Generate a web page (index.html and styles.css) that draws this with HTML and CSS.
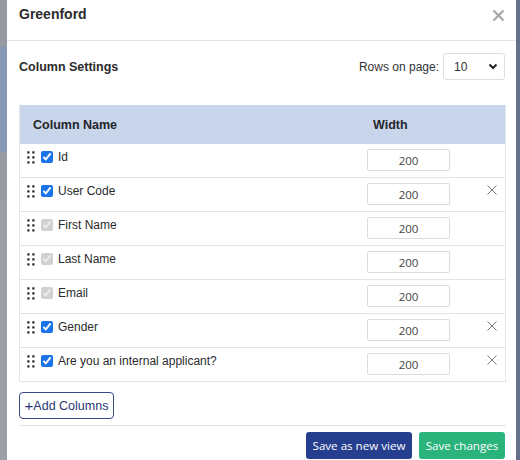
FILE: index.html
```html
<!DOCTYPE html>
<html>
<head>
<meta charset="utf-8">
<link rel="stylesheet" href="styles.css">
</head>
<body>
<div class="screen">
  <div class="backdrop-left"></div>
  <div class="modal">
    <div class="modal-header">
      <h1 class="title">Greenford</h1>
      <span class="close"><svg width="13" height="13" viewBox="0 0 13 13"><path d="M1.5 1.5 L11.5 11.5 M11.5 1.5 L1.5 11.5" stroke="#a9a9a9" stroke-width="2.4" stroke-linecap="butt"/></svg></span>
    </div>
    <div class="modal-body">
      <div class="settings-bar">
        <h2 class="section-title">Column Settings</h2>
        <label class="rows-label">Rows on page:
          <select class="rows-select"><option>10</option></select>
        </label>
      </div>
      <div class="table">
        <div class="thead">
          <div class="th">Column Name</div>
          <div class="th">Width</div>
          <div class="th"></div>
        </div>
        <div class="tr">
          <div class="name-cell"><span class="handle"><svg width="8" height="13" viewBox="0 0 8 13"><g fill="#222"><rect x="0.3" y="0.3" width="2.2" height="2.2"/><rect x="5.3" y="0.3" width="2.2" height="2.2"/><rect x="0.3" y="5.3" width="2.2" height="2.2"/><rect x="5.3" y="5.3" width="2.2" height="2.2"/><rect x="0.3" y="10.3" width="2.2" height="2.2"/><rect x="5.3" y="10.3" width="2.2" height="2.2"/></g></svg></span><input type="checkbox" class="check" checked><span class="label">Id</span></div>
          <div class="width-cell"><input class="width-input" type="text" value="200"></div>
          <div class="del-cell"></div>
        </div>
        <div class="tr">
          <div class="name-cell"><span class="handle"><svg width="8" height="13" viewBox="0 0 8 13"><g fill="#222"><rect x="0.3" y="0.3" width="2.2" height="2.2"/><rect x="5.3" y="0.3" width="2.2" height="2.2"/><rect x="0.3" y="5.3" width="2.2" height="2.2"/><rect x="5.3" y="5.3" width="2.2" height="2.2"/><rect x="0.3" y="10.3" width="2.2" height="2.2"/><rect x="5.3" y="10.3" width="2.2" height="2.2"/></g></svg></span><input type="checkbox" class="check" checked><span class="label">User Code</span></div>
          <div class="width-cell"><input class="width-input" type="text" value="200"></div>
          <div class="del-cell"><svg width="10" height="10" viewBox="0 0 10 10"><path d="M0.5 0.5 L9.5 9.5 M9.5 0.5 L0.5 9.5" stroke="#777" stroke-width="1"/></svg></div>
        </div>
        <div class="tr">
          <div class="name-cell"><span class="handle"><svg width="8" height="13" viewBox="0 0 8 13"><g fill="#222"><rect x="0.3" y="0.3" width="2.2" height="2.2"/><rect x="5.3" y="0.3" width="2.2" height="2.2"/><rect x="0.3" y="5.3" width="2.2" height="2.2"/><rect x="5.3" y="5.3" width="2.2" height="2.2"/><rect x="0.3" y="10.3" width="2.2" height="2.2"/><rect x="5.3" y="10.3" width="2.2" height="2.2"/></g></svg></span><input type="checkbox" class="check" checked disabled><span class="label">First Name</span></div>
          <div class="width-cell"><input class="width-input" type="text" value="200"></div>
          <div class="del-cell"></div>
        </div>
        <div class="tr">
          <div class="name-cell"><span class="handle"><svg width="8" height="13" viewBox="0 0 8 13"><g fill="#222"><rect x="0.3" y="0.3" width="2.2" height="2.2"/><rect x="5.3" y="0.3" width="2.2" height="2.2"/><rect x="0.3" y="5.3" width="2.2" height="2.2"/><rect x="5.3" y="5.3" width="2.2" height="2.2"/><rect x="0.3" y="10.3" width="2.2" height="2.2"/><rect x="5.3" y="10.3" width="2.2" height="2.2"/></g></svg></span><input type="checkbox" class="check" checked disabled><span class="label">Last Name</span></div>
          <div class="width-cell"><input class="width-input" type="text" value="200"></div>
          <div class="del-cell"></div>
        </div>
        <div class="tr">
          <div class="name-cell"><span class="handle"><svg width="8" height="13" viewBox="0 0 8 13"><g fill="#222"><rect x="0.3" y="0.3" width="2.2" height="2.2"/><rect x="5.3" y="0.3" width="2.2" height="2.2"/><rect x="0.3" y="5.3" width="2.2" height="2.2"/><rect x="5.3" y="5.3" width="2.2" height="2.2"/><rect x="0.3" y="10.3" width="2.2" height="2.2"/><rect x="5.3" y="10.3" width="2.2" height="2.2"/></g></svg></span><input type="checkbox" class="check" checked disabled><span class="label">Email</span></div>
          <div class="width-cell"><input class="width-input" type="text" value="200"></div>
          <div class="del-cell"></div>
        </div>
        <div class="tr">
          <div class="name-cell"><span class="handle"><svg width="8" height="13" viewBox="0 0 8 13"><g fill="#222"><rect x="0.3" y="0.3" width="2.2" height="2.2"/><rect x="5.3" y="0.3" width="2.2" height="2.2"/><rect x="0.3" y="5.3" width="2.2" height="2.2"/><rect x="5.3" y="5.3" width="2.2" height="2.2"/><rect x="0.3" y="10.3" width="2.2" height="2.2"/><rect x="5.3" y="10.3" width="2.2" height="2.2"/></g></svg></span><input type="checkbox" class="check" checked><span class="label">Gender</span></div>
          <div class="width-cell"><input class="width-input" type="text" value="200"></div>
          <div class="del-cell"><svg width="10" height="10" viewBox="0 0 10 10"><path d="M0.5 0.5 L9.5 9.5 M9.5 0.5 L0.5 9.5" stroke="#777" stroke-width="1"/></svg></div>
        </div>
        <div class="tr">
          <div class="name-cell"><span class="handle"><svg width="8" height="13" viewBox="0 0 8 13"><g fill="#222"><rect x="0.3" y="0.3" width="2.2" height="2.2"/><rect x="5.3" y="0.3" width="2.2" height="2.2"/><rect x="0.3" y="5.3" width="2.2" height="2.2"/><rect x="5.3" y="5.3" width="2.2" height="2.2"/><rect x="0.3" y="10.3" width="2.2" height="2.2"/><rect x="5.3" y="10.3" width="2.2" height="2.2"/></g></svg></span><input type="checkbox" class="check" checked><span class="label">Are you an internal applicant?</span></div>
          <div class="width-cell"><input class="width-input" type="text" value="200"></div>
          <div class="del-cell"><svg width="10" height="10" viewBox="0 0 10 10"><path d="M0.5 0.5 L9.5 9.5 M9.5 0.5 L0.5 9.5" stroke="#777" stroke-width="1"/></svg></div>
        </div>
      </div>
      <button class="add-btn"><span class="plus">+</span>Add Columns</button>
    </div>
    <div class="modal-footer">
      <button class="btn btn-primary">Save as new view</button>
      <button class="btn btn-success">Save changes</button>
    </div>
  </div>
  <div class="backdrop-right"></div>
</div>
</body>
</html>
```
FILE: styles.css
```css
* { box-sizing: border-box; }
html, body { margin: 0; padding: 0; }
body {
  font-family: "Liberation Sans", Arial, sans-serif;
  color: #2a2a2a;
  background: #8f959c;
}
.screen {
  display: flex;
  width: 520px;
  height: 460px;
  overflow: hidden;
}
.backdrop-left {
  width: 7px;
  flex: none;
  background: linear-gradient(to bottom,
    #959aa1 0, #959aa1 47px,
    #8797b6 47px, #8797b6 152px,
    #979ca3 152px, #979ca3 200px,
    #9ba0a6 200px, #9ba0a6 460px);
}
.backdrop-right {
  width: 4px;
  flex: none;
  background: #65708c;
}
.modal {
  width: 509px;
  flex: none;
  background: #fff;
  display: flex;
  flex-direction: column;
}
.modal-header {
  height: 41px;
  border-bottom: 1px solid #e3e3e3;
  display: flex;
  justify-content: space-between;
  align-items: flex-start;
  padding: 0 11px 0 12px;
}
.title {
  margin: 5px 0 0;
  font-size: 14px;
  line-height: 18px;
  font-weight: bold;
  color: #2b2b2b;
}
.close {
  margin-top: 9px;
  display: flex;
}
.modal-body {
  padding: 12px 10px 0 12px;
}
.settings-bar {
  height: 27px;
  display: flex;
  justify-content: space-between;
  align-items: center;
}
.section-title {
  margin: 0;
  font-size: 12.5px;
  font-weight: bold;
  color: #2b2b2b;
}
.rows-label {
  display: flex;
  align-items: center;
  gap: 4px;
  font-size: 12px;
  color: #333;
  margin-right: 1px;
}
.rows-select {
  -webkit-appearance: none;
  appearance: none;
  width: 62px;
  height: 27px;
  border: 1px solid #dedede;
  border-radius: 3px;
  background: #fff url("data:image/svg+xml;utf8,<svg xmlns='http://www.w3.org/2000/svg' width='10' height='7' viewBox='0 0 10 7'><path d='M1.5 1.5 L5 5 L8.5 1.5' fill='none' stroke='%23222' stroke-width='2'/></svg>") no-repeat right 6px center;
  padding: 0 0 0 10px;
  font-family: "Liberation Sans", Arial, sans-serif;
  font-size: 12px;
  color: #333;
}
.table {
  margin-top: 25px;
  border: 1px solid #e3e6ea;
  border-top: none;
  border-bottom: none;
}
.thead, .tr {
  display: grid;
  grid-template-columns: 340px 120px 1fr;
}
.thead {
  height: 39px;
  background: #c9d5eb;
  align-items: center;
}
.th {
  padding-left: 13px;
  font-size: 12.5px;
  font-weight: bold;
  color: #24262b;
}
.tr {
  height: 34px;
  border-bottom: 1px solid #e3e3e3;
  align-items: flex-start;
}
.name-cell {
  display: flex;
  align-items: flex-start;
  padding: 6px 0 0 7px;
}
.handle {
  display: flex;
  margin-top: 1px;
  width: 8px;
}
.check {
  margin: 1px 0 0 6px;
  width: 12px;
  height: 12px;
  accent-color: #1a73e8;
}
.label {
  margin-left: 5px;
  font-size: 12px;
  line-height: 15px;
  color: #2b2b2b;
}
.width-cell {
  padding: 5px 0 0 7px;
}
.width-input {
  width: 83px;
  height: 22px;
  border: 1px solid #dcdcdc;
  border-radius: 2px;
  text-align: center;
  font-family: "Open Sans", sans-serif;
  font-size: 11.5px;
  color: #444;
  padding: 0;
}
.del-cell {
  display: flex;
  justify-content: center;
  padding-top: 7px;
  padding-right: 1px;
}
.add-btn {
  margin-top: 10px;
  height: 27px;
  width: 95px;
  border: 1px solid #3a4785;
  border-radius: 4px;
  background: #fff;
  color: #2b3677;
  font-family: "Liberation Sans", Arial, sans-serif;
  font-size: 12.5px;
  padding: 0;
  display: flex;
  align-items: center;
  justify-content: center;
}
.plus {
  font-size: 15px;
  font-weight: 300;
  line-height: 1;
}
.modal-footer {
  margin: 6px 10px 0 12px;
  border-top: 1px solid #e3e3e3;
  padding: 6px 1px 0 0;
  display: flex;
  justify-content: flex-end;
  gap: 7px;
}
.btn {
  height: 27px;
  border: none;
  border-radius: 3px;
  color: #fff;
  font-family: "Open Sans", sans-serif;
  font-size: 11.6px;
  white-space: nowrap;
  padding: 0;
}
.btn-primary { background: #253e8e; width: 106px; }
.btn-success { background: #2ab37b; width: 86px; }
```
